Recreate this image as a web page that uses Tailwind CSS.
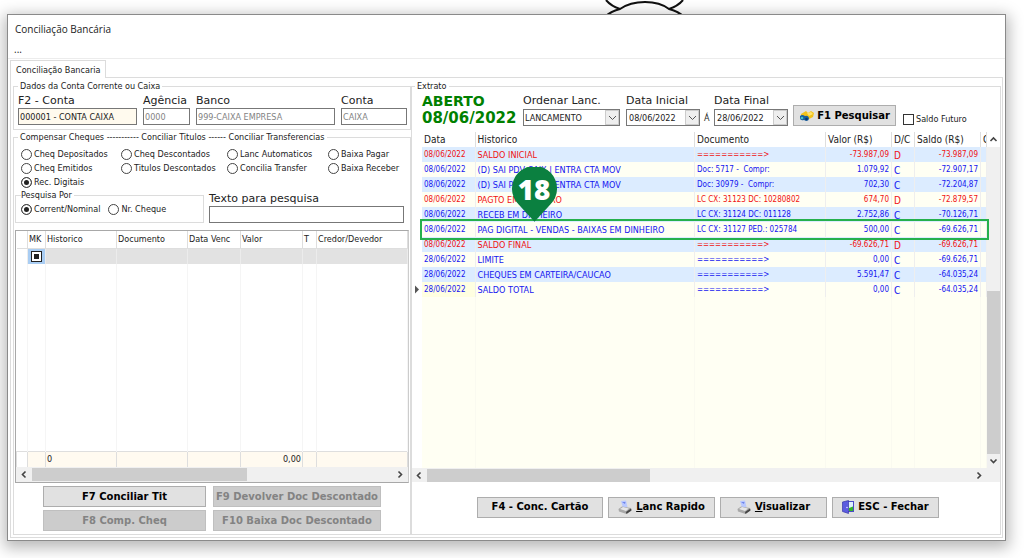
<!DOCTYPE html>
<html lang="pt-BR">
<head>
<meta charset="utf-8">
<title>Conciliação Bancária</title>
<script src="https://cdn.jsdelivr.net/npm/@tailwindcss/browser@4"></script>
</head>
<body class="relative flex h-screen flex-col overflow-hidden bg-white pt-[14px] pr-[18px] pb-[17px] pl-[7px] font-['DejaVu_Sans_Condensed','DejaVu_Sans',sans-serif] text-[9px] leading-[14px] text-[#222]">

<svg class="absolute top-0 left-[600px]" width="90" height="16" viewBox="0 0 90 16" fill="none" stroke="#111" stroke-width="2" aria-hidden="true">
  <path d="M6 16Q10 12 20 9Q30 2 45 2Q60 2 69 9Q79 12 83 16M6 0Q11 6 20 9M83 0Q78 6 69 9"/>
</svg>

<main class="relative flex min-h-0 flex-1 flex-col border border-[#8a8a8a] bg-white shadow-[0_4px_14px_3px_rgba(0,0,0,0.28)]">
  <header class="flex flex-col font-['Open_Sans','Noto_Sans',sans-serif]">
    <h1 class="pt-[6px] pl-[7px] text-[10px] leading-[16px]">Conciliação Bancária</h1>
    <button class="mt-[5px] mb-[2px] h-[14px] w-5 pl-[6px] text-left text-[10px] leading-[12px]" aria-label="Menu">...</button>
  </header>
  <nav class="flex h-[19px] items-end border-t border-[#ececec] pl-[2px]">
    <button class="z-10 -mb-px h-[18px] border border-b-0 border-[#dcdcdc] bg-white px-[5px] leading-[16px]">Conciliação Bancaria</button>
  </nav>

  <section class="mx-[2px] mb-[2px] flex min-h-0 flex-1 border border-[#dcdcdc] pt-px pr-px pb-[2px] pl-[2px]">

    <div class="flex w-[398px] shrink-0 flex-col">
      <fieldset class="min-w-0 border border-[#dcdcdc] px-[4px] pb-[4px]">
        <legend class="px-[2px] leading-[14px]">Dados da Conta Corrente ou Caixa</legend>
        <div class="grid grid-cols-[119px_47px_139px_66px] gap-x-[6px] font-['DejaVu_Sans',sans-serif] text-[11px] leading-[15px]">
          <label for="f2">F2 - Conta</label><label for="ag">Agência</label><label for="bc">Banco</label><label for="ct">Conta</label>
          <input id="f2" value="000001 - CONTA CAIXA" class="h-[17px] min-w-0 border border-[#777] bg-[#fffaee] px-px font-['DejaVu_Sans_Condensed'] text-[9px]">
          <input id="ag" value="0000" disabled class="h-[17px] min-w-0 border border-[#777] bg-white px-px font-['DejaVu_Sans_Condensed'] text-[9px] text-[#838383]">
          <input id="bc" value="999-CAIXA EMPRESA" disabled class="h-[17px] min-w-0 border border-[#777] bg-white px-px font-['DejaVu_Sans_Condensed'] text-[9px] text-[#838383]">
          <input id="ct" value="CAIXA" disabled class="h-[17px] min-w-0 border border-[#777] bg-white px-px font-['DejaVu_Sans_Condensed'] text-[9px] text-[#838383]">
        </div>
      </fieldset>

      <fieldset class="flex min-h-0 min-w-0 flex-1 flex-col border border-[#dcdcdc] px-[1px]">
        <legend class="ml-[3px] px-[2px] leading-[14px]">Compensar Cheques ----------- Conciliar Titulos ------ Conciliar Transferencias</legend>
        <div class="grid grid-cols-[100px_106px_101px_1fr] pt-[3px] pl-[6px] whitespace-nowrap">
          <label class="flex items-center gap-[2px]"><input type="radio" name="op" class="size-[11px] appearance-none rounded-full border border-[#444] bg-white">Cheq Depositados</label>
          <label class="flex items-center gap-[2px]"><input type="radio" name="op" class="size-[11px] appearance-none rounded-full border border-[#444] bg-white">Cheq Descontados</label>
          <label class="flex items-center gap-[2px]"><input type="radio" name="op" class="size-[11px] appearance-none rounded-full border border-[#444] bg-white">Lanc Automaticos</label>
          <label class="flex items-center gap-[2px]"><input type="radio" name="op" class="size-[11px] appearance-none rounded-full border border-[#444] bg-white">Baixa Pagar</label>
          <label class="flex items-center gap-[2px]"><input type="radio" name="op" class="size-[11px] appearance-none rounded-full border border-[#444] bg-white">Cheq Emitidos</label>
          <label class="flex items-center gap-[2px]"><input type="radio" name="op" class="size-[11px] appearance-none rounded-full border border-[#444] bg-white">Titulos Descontados</label>
          <label class="flex items-center gap-[2px]"><input type="radio" name="op" class="size-[11px] appearance-none rounded-full border border-[#444] bg-white">Concilia Transfer</label>
          <label class="flex items-center gap-[2px]"><input type="radio" name="op" class="size-[11px] appearance-none rounded-full border border-[#444] bg-white">Baixa Receber</label>
          <label class="flex items-center gap-[2px]"><input type="radio" name="op" checked class="size-[11px] appearance-none rounded-full border border-[#444] bg-[#222] shadow-[inset_0_0_0_2px_white]">Rec. Digitais</label>
        </div>
        <div class="flex items-end gap-[5px]">
          <fieldset class="h-[34px] w-[189px] border border-[#dcdcdc] pl-[5px]">
            <legend class="pr-[2px] leading-[13px]">Pesquisa Por</legend>
            <div class="flex gap-[8px]">
              <label class="flex items-center gap-[2px]"><input type="radio" name="por" checked class="size-[11px] appearance-none rounded-full border border-[#444] bg-[#222] shadow-[inset_0_0_0_2px_white]">Corrent/Nominal</label>
              <label class="flex items-center gap-[2px]"><input type="radio" name="por" class="size-[11px] appearance-none rounded-full border border-[#444] bg-white">Nr. Cheque</label>
            </div>
          </fieldset>
          <div class="flex w-[195px] flex-col">
            <label for="tx" class="font-['DejaVu_Sans',sans-serif] text-[11px] leading-[15px]">Texto para pesquisa</label>
            <input id="tx" class="h-[17px] w-full border border-[#777] bg-white px-px">
          </div>
        </div>

        <div class="mt-[7px] flex min-h-0 flex-1 flex-col border border-[#a8a8a8] border-r-[#ccc]">
          <div class="min-h-0 flex-1">
            <table class="h-full w-full table-fixed border-collapse text-left">
              <colgroup><col class="w-[11px]"><col class="w-[18px]"><col class="w-[71px]"><col class="w-[71px]"><col class="w-[53px]"><col class="w-[62px]"><col class="w-[14px]"><col></colgroup>
              <thead><tr class="h-[17px] [&>th]:border-r [&>th]:border-b [&>th]:border-[#dedede] [&>th]:p-0 [&>th]:pl-px [&>th]:font-normal [&>th]:whitespace-nowrap">
                <th></th><th>MK</th><th>Historico</th><th>Documento</th><th>Data Venc</th><th>Valor</th><th>T</th><th>Credor/Devedor</th></tr></thead>
              <tbody>
                <tr class="h-[16px] bg-[#e2e2e2] [&>td]:border-r [&>td]:border-[#ececec] [&>td]:p-0">
                  <td class="bg-white"></td>
                  <td class="bg-[#a9cdf3]"><input type="checkbox" checked aria-label="MK" class="mx-auto block size-[11px] appearance-none border border-[#222] bg-[#222] shadow-[inset_0_0_0_2px_white]"></td>
                  <td></td><td></td><td></td><td></td><td></td><td></td></tr>
                <tr class="[&>td]:border-r [&>td]:border-[#f5f5f5]"><td></td><td></td><td></td><td></td><td></td><td></td><td></td><td></td></tr>
              </tbody>
              <tfoot><tr class="h-[16px] bg-[#fffaf0] [&>td]:border [&>td]:border-b-0 [&>td]:border-[#dedede] [&>td]:px-px [&>td]:py-0 [&>td]:leading-[14px]">
                <td class="bg-white"></td><td></td><td>0</td><td></td><td></td><td class="text-right">0,00</td><td></td><td></td></tr></tfoot>
            </table>
          </div>
          <div class="flex h-[15px] items-center bg-[#f0f0f0]">
            <svg width="16" height="9" viewBox="0 0 16 9" fill="none" stroke="#444" stroke-width="1.600"><path d="M9.500 1.500L6.500 4.500L9.500 7.500"/></svg>
            <div class="h-[13px] w-[215px] bg-[#cdcdcd]"></div>
            <svg class="ml-auto" width="16" height="9" viewBox="0 0 16 9" fill="none" stroke="#444" stroke-width="1.600"><path d="M6.500 1.500L9.500 4.500L6.500 7.500"/></svg>
          </div>
        </div>

        <div class="grid grid-cols-[163px_168px] gap-x-[7px] gap-y-[3px] py-[3px] pl-[28px] font-['DejaVu_Sans',sans-serif] text-[10px] font-bold whitespace-nowrap">
          <button class="h-[21px] border border-[#adadad] bg-[#e1e1e1] text-black">F7 Conciliar Tit</button>
          <button disabled class="h-[21px] border border-[#bfbfbf] bg-[#cccccc] text-[#838383]">F9 Devolver Doc Descontado</button>
          <button disabled class="h-[21px] border border-[#bfbfbf] bg-[#cccccc] text-[#838383]">F8 Comp. Cheq</button>
          <button disabled class="h-[21px] border border-[#bfbfbf] bg-[#cccccc] text-[#838383]">F10 Baixa Doc Descontado</button>
        </div>
      </fieldset>
    </div>

    <fieldset class="flex min-h-0 min-w-0 flex-1 flex-col border border-[#dcdcdc]">
      <legend class="ml-[3px] px-[2px] leading-[14px]">Extrato</legend>
      <div class="flex h-[39px] items-start pl-[10px] whitespace-nowrap">
        <p class="w-[101px] font-['DejaVu_Sans',sans-serif] text-[15px] leading-[18px] font-bold text-[#008000]"><span class="block text-[14px] leading-[16px]">ABERTO</span>08/06/2022</p>
        <div class="flex h-[33px] items-end">
          <div class="flex w-[103px] flex-col">
            <label for="ord" class="font-['DejaVu_Sans',sans-serif] text-[11px] leading-[16px]">Ordenar Lanc.</label>
            <div class="relative w-[97px]">
              <select id="ord" class="block h-[17px] w-full appearance-none border border-[#777] bg-white px-px text-[9px]"><option>LANCAMENTO</option></select>
              <span class="pointer-events-none absolute inset-y-px right-px flex w-[14px] items-center justify-center border border-[#ccc] bg-[#eee]"><svg width="9" height="6" viewBox="0 0 9 6" fill="none" stroke="#555"><path d="M1 1L4.500 4.500L8 1"/></svg></span>
            </div>
          </div>
          <div class="flex w-[88px] flex-col">
            <label for="di" class="font-['DejaVu_Sans',sans-serif] text-[11px] leading-[16px]">Data Inicial</label>
            <div class="flex items-center gap-[4px]">
              <div class="flex h-[17px] w-[74px] border border-[#777] bg-white">
                <input id="di" value="08/06/2022" class="min-w-0 flex-1 px-[2px]">
                <button aria-label="Abrir calendário inicial" class="flex w-[14px] items-center justify-center border border-[#ccc] bg-[#eee]"><svg width="9" height="6" viewBox="0 0 9 6" fill="none" stroke="#555"><path d="M1 1L4.500 4.500L8 1"/></svg></button>
              </div><span>Á</span>
            </div>
          </div>
          <div class="flex w-[79px] flex-col">
            <label for="df" class="font-['DejaVu_Sans',sans-serif] text-[11px] leading-[16px]">Data Final</label>
            <div class="flex h-[17px] w-[74px] border border-[#777] bg-white">
              <input id="df" value="28/06/2022" class="min-w-0 flex-1 px-[2px]">
              <button aria-label="Abrir calendário final" class="flex w-[14px] items-center justify-center border border-[#ccc] bg-[#eee]"><svg width="9" height="6" viewBox="0 0 9 6" fill="none" stroke="#555"><path d="M1 1L4.500 4.500L8 1"/></svg></button>
            </div>
          </div>
          <button class="flex h-[21px] w-[103px] items-center justify-center gap-[3px] border border-[#adadad] bg-[#e1e1e1] font-['DejaVu_Sans',sans-serif] text-[10px] font-bold text-black">
            <svg width="15" height="12" viewBox="0 0 15 12"><path d="M2 4L7 1L9 3L12 1L15 3L14 7L10 9L6 8L2 7Z" fill="#f2c21b"/><path d="M8 3L12 2L14 4L10 6Z" fill="#ffe36a"/><path d="M1 6Q3 4 6 6Q9 5 10 8Q10 11 7 11L5 10Q1 11 1 8Z" fill="#185f9e"/><circle cx="3" cy="8" r="1.300" fill="#4bc0c0"/><circle cx="7.500" cy="9" r="1.300" fill="#0c3566"/></svg>
            F1 Pesquisar</button>
          <label class="ml-[7px] flex items-center gap-[2px]"><input type="checkbox" class="size-[11px] appearance-none border border-[#333] bg-white">Saldo Futuro</label>
        </div>
      </div>

      <div class="flex min-h-0 flex-1">
        <div class="flex w-[10px] flex-col pt-[153px]"><svg width="10" height="9" viewBox="0 0 10 9"><path d="M3 0.500L7 4.500L3 8.500Z" fill="#555"/></svg></div>
        <div class="min-w-0 flex-1 bg-[#fffff3]">
          <table class="h-full w-full table-fixed border-collapse text-left text-[8px] leading-[14px] whitespace-nowrap text-[#1414f0] [&_td]:border-r [&_td]:border-[#eeeeee] [&_td]:px-[2px] [&_td]:py-0 [&_td:nth-child(2)]:text-[9px] [&_td:nth-child(5)]:pt-[3px] [&_td:nth-child(5)]:text-[10px] [&_td:nth-child(5)]:leading-[12px]">
            <colgroup><col class="w-[53px]"><col><col class="w-[131px]"><col class="w-[66px]"><col class="w-[23px]"><col class="w-[66px]"><col class="w-[6px]"></colgroup>
            <thead><tr class="h-[15px] bg-white text-[10px] text-[#222] [&>th]:overflow-hidden [&>th]:border-r [&>th]:border-[#dedede] [&>th]:p-0 [&>th]:pl-[2px] [&>th]:font-normal"><th>Data</th><th>Historico</th><th>Documento</th><th>Valor (R$)</th><th>D/C</th><th>Saldo (R$)</th><th>C</th></tr></thead>
            <tbody>
              <tr class="h-[15px] bg-[#dcecff] text-[#f01010]"><td>08/06/2022</td><td>SALDO INICIAL</td><td>===========&gt;</td><td class="text-right">-73.987,09</td><td>D</td><td class="text-right">-73.987,09</td><td></td></tr>
              <tr class="h-[15px]"><td>08/06/2022</td><td>(D) SAI PDV CAIX | ENTRA CTA MOV</td><td>Doc: 5717 -&nbsp; Compr:</td><td class="text-right">1.079,92</td><td>C</td><td class="text-right">-72.907,17</td><td></td></tr>
              <tr class="h-[15px] bg-[#dcecff]"><td>08/06/2022</td><td>(D) SAI PDV CAIX | ENTRA CTA MOV</td><td>Doc: 30979 -&nbsp; Compr:</td><td class="text-right">702,30</td><td>C</td><td class="text-right">-72.204,87</td><td></td></tr>
              <tr class="h-[15px] text-[#f01010]"><td>08/06/2022</td><td>PAGTO EM DINHEIRO</td><td>LC CX: 31123 DC: 10280802</td><td class="text-right">674,70</td><td>D</td><td class="text-right">-72.879,57</td><td></td></tr>
              <tr class="h-[15px] bg-[#dcecff]"><td>08/06/2022</td><td>RECEB EM DINHEIRO</td><td>LC CX: 31124 DC: 011128</td><td class="text-right">2.752,86</td><td>C</td><td class="text-right">-70.126,71</td><td></td></tr>
              <tr class="relative h-[15px]"><td>08/06/2022<span class="pointer-events-none absolute -inset-x-[2px] -inset-y-[3px] border-2 border-[#25b04c]"></span>
                <svg class="absolute bottom-[15px] left-[89px]" width="47" height="55" viewBox="0 0 49 57" role="img" aria-label="18"><path d="M24.500 57L8 39A23.500 23.500 0 1 1 41 39Z" fill="#0b8040"/><text x="24" y="34" text-anchor="middle" font-family="Open Sans" font-weight="800" font-size="29" fill="#fff">18</text></svg></td><td>PAG DIGITAL - VENDAS - BAIXAS EM DINHEIRO</td><td>LC CX: 31127 PED.: 025784</td><td class="text-right">500,00</td><td>C</td><td class="text-right">-69.626,71</td><td></td></tr>
              <tr class="h-[15px] bg-[#dcecff] text-[#f01010]"><td>08/06/2022</td><td>SALDO FINAL</td><td>===========&gt;</td><td class="text-right">-69.626,71</td><td>D</td><td class="text-right">-69.626,71</td><td></td></tr>
              <tr class="h-[15px]"><td>28/06/2022</td><td>LIMITE</td><td>===========&gt;</td><td class="text-right">0,00</td><td>C</td><td class="text-right">-69.626,71</td><td></td></tr>
              <tr class="h-[15px] bg-[#dcecff]"><td>28/06/2022</td><td>CHEQUES EM CARTEIRA/CAUCAO</td><td>===========&gt;</td><td class="text-right">5.591,47</td><td>C</td><td class="text-right">-64.035,24</td><td></td></tr>
              <tr class="h-[15px]"><td class="bg-[#ffffe1]">28/06/2022</td><td>SALDO TOTAL</td><td>===========&gt;</td><td class="text-right">0,00</td><td>C</td><td class="text-right">-64.035,24</td><td></td></tr>
              <tr class="[&>td]:border-[#fafaf0]"><td></td><td></td><td></td><td></td><td></td><td></td><td></td></tr>
            </tbody>
          </table>
        </div>
        <div class="flex w-[13px] flex-col items-center bg-[#f0f0f0]">
          <svg class="bg-white" width="13" height="15" viewBox="0 0 13 15" fill="none" stroke="#444" stroke-width="1.600"><path d="M3.500 9L6.500 6L9.500 9"/></svg>
          <div class="mt-auto h-[163px] w-full bg-[#cdcdcd]"></div>
          <svg width="13" height="14" viewBox="0 0 13 14" fill="none" stroke="#444" stroke-width="1.600"><path d="M3.500 5.500L6.500 8.500L9.500 5.500"/></svg>
        </div>
      </div>
      <div class="flex h-[14px] items-center bg-[#f0f0f0]">
        <svg width="15" height="9" viewBox="0 0 15 9" fill="none" stroke="#444" stroke-width="1.600"><path d="M8.500 1.500L5.500 4.500L8.500 7.500"/></svg>
        <div class="h-[13px] w-[223px] bg-[#cdcdcd]"></div>
        <svg class="mr-[13px] ml-auto" width="16" height="9" viewBox="0 0 16 9" fill="none" stroke="#444" stroke-width="1.600"><path d="M6.500 1.500L9.500 4.500L6.500 7.500"/></svg>
      </div>
      <div class="flex h-[52px] items-center gap-[5px] pb-[2px] pl-[65px] font-['DejaVu_Sans',sans-serif] text-[10px] font-bold whitespace-nowrap text-black">
        <button class="h-[21px] w-[126px] border border-[#adadad] bg-[#e1e1e1]">F4 - Conc. Cartão</button>
        <button class="flex h-[21px] w-[107px] items-center justify-center gap-[4px] border border-[#adadad] bg-[#e1e1e1]">
          <svg width="14" height="15" viewBox="0 0 14 15"><path d="M3 1L8 0.500L9.500 7L5 8Z" fill="#b9c8ff"/><path d="M4 2L7.500 2L7 4Z" fill="#6d84ea"/><path d="M0.500 9L4 6.500L13 8L13.500 10L8.500 14L1 11.500Z" fill="#a8a8a8"/><path d="M2 9L5 7L11 8.500L8 11Z" fill="#e6e6e6"/><path d="M8 12L13 8.500L13.500 10.500L8.500 14Z" fill="#444"/></svg>
          <span><u>L</u>anc Rapido</span></button>
        <button class="flex h-[21px] w-[107px] items-center justify-center gap-[4px] border border-[#adadad] bg-[#e1e1e1]">
          <svg width="14" height="15" viewBox="0 0 14 15"><path d="M3 1L8 0.500L9.500 7L5 8Z" fill="#b9c8ff"/><path d="M4 2L7.500 2L7 4Z" fill="#6d84ea"/><path d="M0.500 9L4 6.500L13 8L13.500 10L8.500 14L1 11.500Z" fill="#a8a8a8"/><path d="M2 9L5 7L11 8.500L8 11Z" fill="#e6e6e6"/><path d="M8 12L13 8.500L13.500 10.500L8.500 14Z" fill="#444"/></svg>
          <span><u>V</u>isualizar</span></button>
        <button class="flex h-[21px] w-[107px] items-center justify-center gap-[4px] border border-[#adadad] bg-[#e1e1e1]">
          <svg width="12" height="14" viewBox="0 0 12 14"><rect x="4.500" y="1.500" width="7" height="10" fill="#dff2ff" stroke="#4b4bc8"/><path d="M7 8L11 6.500V11H7Z" fill="#35b52a"/><path d="M0.500 2L6.500 0.500V13.500L0.500 11.500Z" fill="#5c5ce0" stroke="#3838a8" stroke-width=".7"/><circle cx="5" cy="7.500" r=".7" fill="#fff"/></svg>
          ESC - Fechar</button>
      </div>
    </fieldset>
  </section>
</main>
</body>
</html>
